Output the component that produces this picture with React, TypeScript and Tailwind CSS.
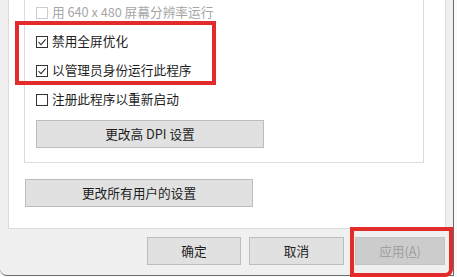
import React from "react";

const font = { fontFamily: '"Noto Sans CJK SC", "Noto Sans", sans-serif' };

function Box({ checked, disabled }: { checked?: boolean; disabled?: boolean }) {
  return (
    <div
      className={`w-[12px] h-[12px] border flex items-center justify-center bg-white shrink-0 ${
        disabled ? "border-[#cccccc]" : "border-[#333333]"
      }`}
    >
      {checked && (
        <svg width="10" height="10" viewBox="0 0 10 10">
          <path d="M1.5 5.2 L4 7.6 L8.6 2.4" fill="none" stroke="#333" strokeWidth="1.1" />
        </svg>
      )}
    </div>
  );
}

function Row({ label, checked, disabled }: { label: string; checked?: boolean; disabled?: boolean }) {
  return (
    <div className="h-[29px] flex items-center gap-[4px]">
      <Box checked={checked} disabled={disabled} />
      <span className={`text-[12.7px] leading-none ${disabled ? "text-[#a6a6a6]" : "text-[#1e1e1e]"}`}>{label}</span>
    </div>
  );
}

function Btn({ label, w, disabled, children }: { label?: string; w: string; disabled?: boolean; children?: React.ReactNode }) {
  return (
    <div
      className={`${w} h-[28px] border flex items-center justify-center text-[12.7px] ${
        disabled ? "bg-[#cccccc] border-[#c4c4c4] text-[#a0a0a0]" : "bg-[#e1e1e1] border-[#bdbdbd] text-[#1e1e1e]"
      }`}
    >
      {children ?? label}
    </div>
  );
}

export default function App() {
  return (
    <div className="w-[457px] h-[277px] relative overflow-hidden bg-[#fafafa]" style={font}>
      <div className="w-[454px] h-[276px] bg-[#f0f0f0] border-r border-b border-[#6a6a6a] rounded-bl-[7px] flex flex-col">
        <div className="ml-[8px] w-[438px] h-[229px] bg-white border-l border-r border-b border-[#dadada] pl-[15px] flex flex-col">
          <div className="w-[400px] border-l border-r border-b border-[#dcdcdc] pl-[11px] pb-[14px] flex flex-col">
            <div className="-mt-[2px] flex flex-col">
              <Row label="用 640 x 480 屏幕分辨率运行" disabled />
              <Row label="禁用全屏优化" checked />
              <Row label="以管理员身份运行此程序" checked />
              <Row label="注册此程序以重新启动" />
            </div>
            <div className="mt-[6px]">
              <Btn w="w-[228px]" label="更改高 DPI 设置" />
            </div>
          </div>
          <div className="mt-[16px] ml-[1px]">
            <Btn w="w-[228px]" label="更改所有用户的设置" />
          </div>
        </div>
        <div className="mt-[8px] ml-[147px] flex">
          <Btn w="w-[94px]" label="确定" />
          <div className="ml-[8px]">
            <Btn w="w-[95px]" label="取消" />
          </div>
          <div className="ml-[11px]">
            <Btn w="w-[90px]" disabled>
              <span>
                应用(<span className="underline">A</span>)
              </span>
            </Btn>
          </div>
        </div>
      </div>
      <div className="absolute left-[15px] top-[21px] w-[201px] h-[64px] border-[4px] border-[#e32b2b]" />
      <div className="absolute left-[350px] top-[227px] w-[103px] h-[50px] border-[4px] border-[#e32b2b] rounded-br-[8px]" />
    </div>
  );
}
